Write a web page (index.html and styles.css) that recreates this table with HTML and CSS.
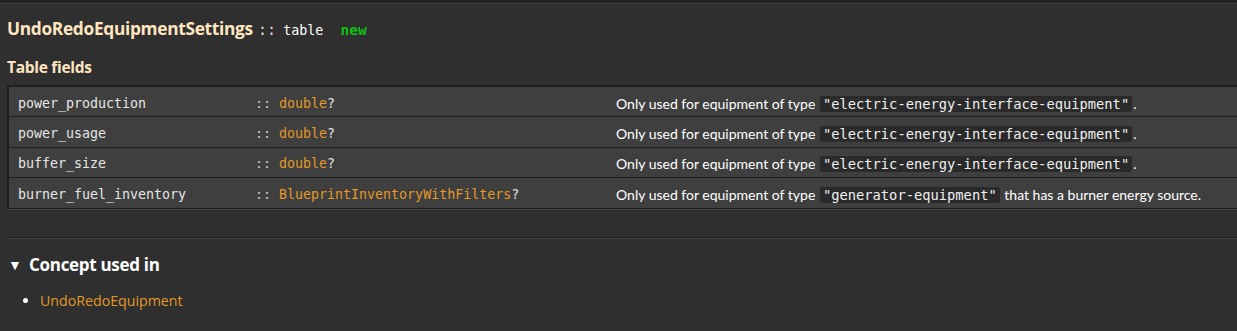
FILE: index.html
```html
<!DOCTYPE html>
<html>
<head>
<meta charset="utf-8">
<link rel="stylesheet" href="styles.css">
</head>
<body>
<div class="topbar"></div>
<div class="content">
  <h2 class="title">UndoRedoEquipmentSettings <span class="sep">::</span> <code class="kind">table</code> <code class="new">new</code></h2>
  <h3 class="subtitle">Table fields</h3>
  <div class="fields">
    <div class="row">
      <div class="name">power_production</div>
      <div class="type"><span class="sep">::</span> <span class="ref">double</span>?</div>
      <div class="desc">Only used for equipment of type <code class="lit">"electric-energy-interface-equipment"</code>.</div>
    </div>
    <div class="row">
      <div class="name">power_usage</div>
      <div class="type"><span class="sep">::</span> <span class="ref">double</span>?</div>
      <div class="desc">Only used for equipment of type <code class="lit">"electric-energy-interface-equipment"</code>.</div>
    </div>
    <div class="row">
      <div class="name">buffer_size</div>
      <div class="type"><span class="sep">::</span> <span class="ref">double</span>?</div>
      <div class="desc">Only used for equipment of type <code class="lit">"electric-energy-interface-equipment"</code>.</div>
    </div>
    <div class="row">
      <div class="name">burner_fuel_inventory</div>
      <div class="type"><span class="sep">::</span> <span class="ref">BlueprintInventoryWithFilters</span>?</div>
      <div class="desc">Only used for equipment of type <code class="lit">"generator-equipment"</code> that has a burner energy source.</div>
    </div>
  </div>
  <hr class="rule">
  <div class="concept">
    <div class="concept-head"><span class="tri">▼</span><span>Concept used in</span></div>
    <ul class="uses">
      <li><a class="ref">UndoRedoEquipment</a></li>
    </ul>
  </div>
</div>
</body>
</html>
```
FILE: styles.css
```css
html, body {
  margin: 0;
  padding: 0;
  background: #2f2f2f;
  color: #ffffff;
  font-family: "Open Sans", sans-serif;
}
.topbar {
  height: 3px;
  background: #232323;
  border-bottom: 1px solid #404040;
}
.content {
  padding-left: 7px;
}
code {
  font-family: "DejaVu Sans Mono", monospace;
}
.title {
  margin: 13px 0 0 0;
  font-size: 17.3px;
  line-height: 24px;
  font-weight: bold;
  color: #ffe6c0;
  letter-spacing: -0.3px;
}
.title .sep {
  font-family: "DejaVu Sans Mono", monospace;
  font-size: 15px;
  color: #dddddd;
  font-weight: normal;
  letter-spacing: 0;
  margin-left: 1px;
}
.title .kind {
  font-size: 13.3px;
  font-weight: normal;
  color: #ffffff;
  letter-spacing: 0;
  margin-left: 3px;
}
.title .new {
  font-size: 14.5px;
  font-weight: bold;
  color: #0fbf0f;
  margin-left: 13px;
  letter-spacing: 0;
}
.subtitle {
  margin: 14px 0 8px 0;
  font-size: 15.5px;
  line-height: 20px;
  font-weight: bold;
  color: #ffe6c0;
  letter-spacing: -0.3px;
}
.fields {
  border: 2px solid #1f1f1f;
  border-right: none;
  border-bottom: 1px solid #1f1f1f;
  box-shadow: 0 1px 0 #474747;
}
.row {
  display: grid;
  grid-template-columns: 237px 361px 1fr;
  align-items: center;
  height: 29.4px;
  background: #3f3f3f;
  border-bottom: 1px solid #1f1f1f;
}
.row:last-child {
  height: 30px;
  border-bottom: none;
}
.row > div {
  padding-left: 9px;
  padding-top: 3px;
  white-space: nowrap;
}
.name, .type {
  font-family: "DejaVu Sans Mono", monospace;
  font-size: 13.3px;
  color: #e6e6e6;
}
.type .sep {
  color: #c8c8c8;
}
.ref {
  color: #e39827;
}
.desc {
  font-family: "Lato", sans-serif;
  font-size: 14px;
  color: #ffffff;
}
.lit {
  font-size: 13.75px;
  line-height: 16px;
  display: inline-block;
  background: #2a2a2a;
  border-radius: 3px;
  padding: 0 3px;
  margin: 0 1px;
  color: #f0f0f0;
}
.rule {
  margin: 28px 0 0 0;
  border: none;
  border-top: 1px solid #1f1f1f;
  border-bottom: 1px solid #474747;
  height: 0;
}
.concept-head {
  display: flex;
  align-items: center;
  margin-top: 14px;
  font-size: 17px;
  font-weight: bold;
  color: #ffffff;
  letter-spacing: -0.3px;
}
.tri {
  font-size: 14px;
  width: 21px;
  margin-left: 1px;
}
.uses {
  margin: 15px 0 0 0;
  padding-left: 33px;
  font-size: 14.2px;
}
.uses li {
  line-height: 20px;
}
.uses li::marker {
  color: #ffffff;
}
```
